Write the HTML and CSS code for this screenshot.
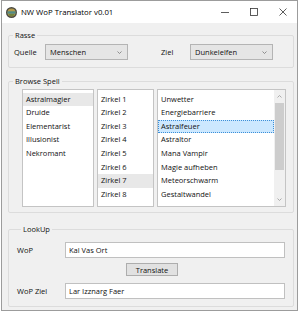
FILE: index.html
```html
<!DOCTYPE html>
<html lang="de">
<head>
    <meta charset="UTF-8">
    <title>NW WoP Translator v0.01</title>
    <link rel="stylesheet" href="styles.css">
</head>
<body>
    <div class="window">
        <div class="titlebar">
            <svg class="app-icon" width="11" height="11" viewBox="0 0 11 11">
                <circle cx="5.5" cy="5.5" r="5.5" fill="#4a4a42"/>
                <circle cx="5.5" cy="5.5" r="4" fill="#b49a4c"/>
                <rect x="1.5" y="4.3" width="8" height="2.4" fill="#4f8a86"/>
                <path d="M2.5 7.2h6l-1 1.6h-4z" fill="#5d7a3a"/>
            </svg>
            <span class="title">NW WoP Translator v0.01</span>
            <div class="caption">
                <span class="cap-btn">
                    <svg width="10" height="10" viewBox="0 0 10 10"><path d="M1 5.5h8" stroke="#333" stroke-width="0.8"/></svg>
                </span>
                <span class="cap-btn">
                    <svg width="10" height="10" viewBox="0 0 10 10"><rect x="1.5" y="1.5" width="7" height="7" fill="none" stroke="#333" stroke-width="0.8"/></svg>
                </span>
                <span class="cap-btn">
                    <svg width="10" height="10" viewBox="0 0 10 10"><path d="M1.5 1.5l7 7M8.5 1.5l-7 7" stroke="#333" stroke-width="0.8"/></svg>
                </span>
            </div>
        </div>

        <div class="client">
            <fieldset class="group group-rasse">
                <legend>Rasse</legend>
                <div class="rasse-row">
                    <label class="lbl-quelle">Quelle</label>
                    <div class="combo">
                        <span>Menschen</span>
                        <svg class="chevron" width="5" height="3" viewBox="0 0 5 3"><path d="M0.5 0.5l2 2 2-2" fill="none" stroke="#777" stroke-width="0.8"/></svg>
                    </div>
                    <label class="lbl-ziel">Ziel</label>
                    <div class="combo">
                        <span>Dunkelelfen</span>
                        <svg class="chevron" width="5" height="3" viewBox="0 0 5 3"><path d="M0.5 0.5l2 2 2-2" fill="none" stroke="#777" stroke-width="0.8"/></svg>
                    </div>
                </div>
            </fieldset>

            <fieldset class="group group-browse">
                <legend>Browse Spell</legend>
                <div class="lists">
                    <ul class="listbox list-classes">
                        <li class="selected-dim">Astralmagier</li>
                        <li>Druide</li>
                        <li>Elementarist</li>
                        <li>Illusionist</li>
                        <li>Nekromant</li>
                    </ul>
                    <ul class="listbox list-circles">
                        <li>Zirkel 1</li>
                        <li>Zirkel 2</li>
                        <li>Zirkel 3</li>
                        <li>Zirkel 4</li>
                        <li>Zirkel 5</li>
                        <li>Zirkel 6</li>
                        <li class="selected-dim">Zirkel 7</li>
                        <li>Zirkel 8</li>
                    </ul>
                    <div class="listbox list-spells">
                        <ul class="spell-items">
                            <li>Unwetter</li>
                            <li>Energiebarriere</li>
                            <li class="selected">Astralfeuer</li>
                            <li>Astraltor</li>
                            <li>Mana Vampir</li>
                            <li>Magie aufheben</li>
                            <li>Meteorschwarm</li>
                            <li>Gestaltwandel</li>
                            <li>Astralwanderung</li>
                        </ul>
                        <div class="scrollbar">
                            <svg class="sb-arrow" width="5" height="3" viewBox="0 0 5 3"><path d="M0.5 2.5l2-2 2 2" fill="none" stroke="#999" stroke-width="0.8"/></svg>
                            <div class="sb-track"><div class="sb-thumb"></div></div>
                            <svg class="sb-arrow" width="5" height="3" viewBox="0 0 5 3"><path d="M0.5 0.5l2 2 2-2" fill="none" stroke="#999" stroke-width="0.8"/></svg>
                        </div>
                    </div>
                </div>
            </fieldset>

            <fieldset class="group group-lookup">
                <legend>LookUp</legend>
                <div class="field-row">
                    <label>WoP</label>
                    <div class="textbox">Kal Vas Ort</div>
                </div>
                <button class="btn">Translate</button>
                <div class="field-row field-row-2">
                    <label>WoP Ziel</label>
                    <div class="textbox">Lar Izznarg Faer</div>
                </div>
            </fieldset>
        </div>
    </div>
</body>
</html>
```

FILE: styles.css
```css
* {
    box-sizing: border-box;
    margin: 0;
    padding: 0;
}

body {
    background-color: #ffffff;
    font-family: 'Open Sans', 'Noto Sans', sans-serif;
    font-size: 7.5px;
    color: #111111;
}

.window {
    margin-left: 1px;
    width: 297px;
    height: 311px;
    border: 1px solid #9c9c9c;
    background-color: #f0f0f0;
}

/* Title bar */
.titlebar {
    height: 22px;
    display: flex;
    align-items: center;
    background-color: #ffffff;
}

.app-icon {
    margin-left: 4px;
    flex-shrink: 0;
}

.title {
    margin-left: 4px;
    font-size: 7.8px;
    color: #000;
}

.caption {
    margin-left: auto;
    display: flex;
}

.cap-btn {
    width: 29px;
    height: 22px;
    display: flex;
    align-items: center;
    justify-content: center;
}

/* Client area */
.client {
    padding: 7px 3px 0 6px;
}

.group {
    border: 1px solid #dcdcdc;
    border-radius: 2px;
}

.group legend {
    margin-left: 4px;
    padding: 0 2px;
    line-height: 11px;
}

/* Rasse */
.rasse-row {
    display: flex;
    align-items: center;
    height: 16px;
    margin: 3px 0 7px;
    padding-left: 5px;
}

.lbl-quelle {
    width: 31px;
}

.lbl-ziel {
    margin-left: 33px;
    width: 29px;
}

.combo {
    width: 83px;
    height: 16px;
    display: flex;
    align-items: center;
    justify-content: space-between;
    padding: 0 5px 0 4px;
    background-color: #e5e5e5;
    border: 1px solid #b4b4b4;
}

/* Browse Spell */
.group-browse {
    margin-top: 8px;
}

.lists {
    display: flex;
    gap: 3px;
    height: 118px;
    margin: 2px 0 5px;
    padding-left: 13px;
}

.listbox {
    list-style: none;
    background-color: #ffffff;
    border: 1px solid #c4c4c4;
    padding-top: 2.5px;
}

.listbox li {
    height: 13.67px;
    line-height: 13.67px;
    padding-left: 3px;
    white-space: nowrap;
}

.list-classes {
    width: 72px;
}

.list-circles {
    width: 57px;
}

.list-spells {
    width: 129px;
    display: flex;
    padding-top: 0;
    overflow: hidden;
}

.spell-items {
    flex: 1;
    list-style: none;
    padding-top: 2.5px;
}

.selected-dim {
    background-color: #e8e8e8;
}

.listbox li.selected {
    background-color: #cce8ff;
    outline: 1px dotted #3c8fd8;
    outline-offset: -1px;
}

.scrollbar {
    width: 11px;
    display: flex;
    flex-direction: column;
    align-items: center;
    background-color: #f0f0f0;
}

.sb-arrow {
    margin: 5px 0;
}

.sb-track {
    flex: 1;
    width: 100%;
}

.sb-thumb {
    height: 67px;
    margin: 0 1px;
    background-color: #cdcdcd;
}

/* LookUp */
.group-lookup {
    margin-top: 11px;
    padding: 7px 0 7px 8px;
}

.field-row {
    display: flex;
    align-items: center;
}

.field-row label {
    width: 48px;
}

.field-row-2 {
    margin-top: 7px;
}

.textbox {
    width: 220px;
    height: 16px;
    line-height: 14px;
    padding-left: 3px;
    background-color: #ffffff;
    border: 1px solid #c0c0c0;
}

.btn {
    display: block;
    margin: 5px 0 0 109px;
    width: 52px;
    height: 13px;
    font-family: inherit;
    font-size: 7.5px;
    color: #111111;
    background-color: #e1e1e1;
    border: 1px solid #adadad;
}
```
